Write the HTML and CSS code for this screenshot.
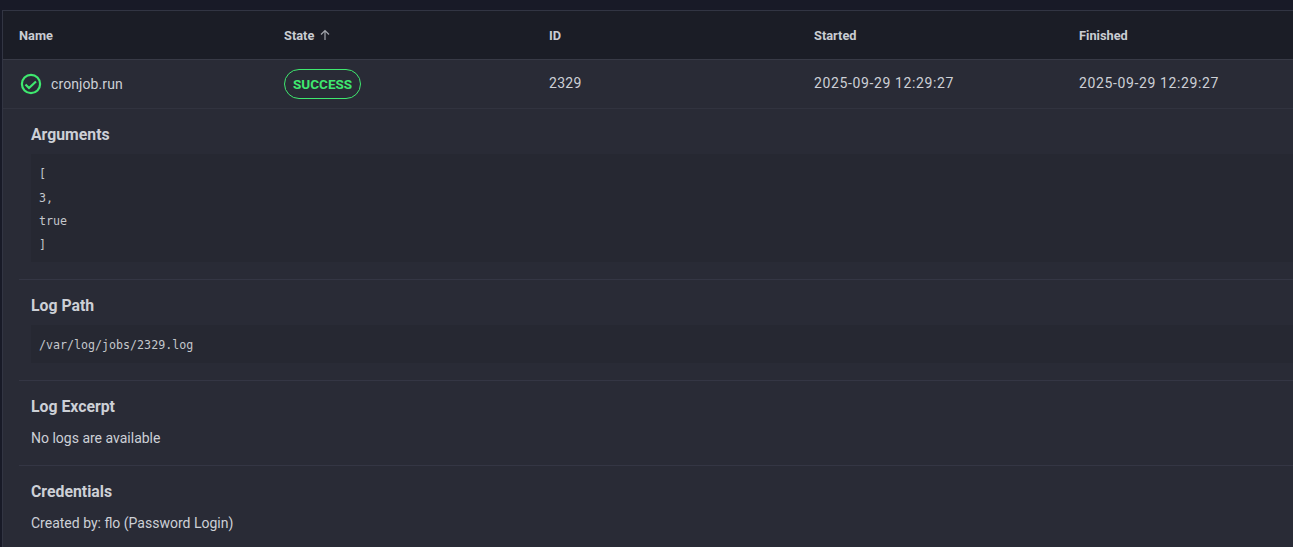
FILE: index.html
```html
<!DOCTYPE html>
<html lang="en">
<head>
<meta charset="utf-8">
<title>Job</title>
<link rel="stylesheet" href="styles.css">
</head>
<body>
<div class="panel">
  <div class="grid head">
    <div class="cell">Name</div>
    <div class="cell">State
      <svg class="arrow" width="12" height="12" viewBox="0 0 12 12" fill="none" stroke="currentColor" stroke-width="1.2"><path d="M6 11V2M2 5.5 6 1.5l4 4"/></svg>
    </div>
    <div class="cell">ID</div>
    <div class="cell">Started</div>
    <div class="cell">Finished</div>
  </div>
  <div class="grid row">
    <div class="cell name">
      <svg class="check" width="22" height="22" viewBox="0 0 22 22" fill="none" stroke="#3fe86f" stroke-width="2.2"><circle cx="11" cy="11" r="9.1"/><path d="M5.5 11.5 9 15l7-6.5"/></svg>
      <span>cronjob.run</span>
    </div>
    <div class="cell"><span class="badge">SUCCESS</span></div>
    <div class="cell value id">2329</div>
    <div class="cell value date">2025-09-29 12:29:27</div>
    <div class="cell value date">2025-09-29 12:29:27</div>
  </div>
  <div class="details">
    <section class="section">
      <h3>Arguments</h3>
      <pre class="code">[
3,
true
]</pre>
    </section>
    <section class="section">
      <h3>Log Path</h3>
      <pre class="code">/var/log/jobs/2329.log</pre>
    </section>
    <section class="section">
      <h3>Log Excerpt</h3>
      <p>No logs are available</p>
    </section>
    <section class="section">
      <h3>Credentials</h3>
      <p>Created by: flo (Password Login)</p>
    </section>
  </div>
</div>
</body>
</html>
```
FILE: styles.css
```css
* { box-sizing: border-box; }
html, body { height: 100%; }
body {
  margin: 0;
  padding: 10px 0 0 2px;
  background: #181a27;
  color: #cdd0d6;
  font-family: "Roboto", "Liberation Sans", sans-serif;
  font-size: 14px;
  overflow: hidden;
}
.panel {
  width: 1340px;
  height: 537px;
  background: #292b36;
  border-top: 1px solid #323543;
  border-left: 1px solid #323543;
}
.grid {
  display: grid;
  grid-template-columns: repeat(5, 265px);
  align-items: center;
  padding-left: 16px;
  border-bottom: 1px solid #383a46;
}
.head {
  height: 49px;
  background: #1b1d26;
  font-size: 12.8px;
  font-weight: 700;
  color: #c9ccd2;
}
.row { height: 49px; border-bottom-color: #31333f; }
.cell { display: flex; align-items: center; }
.arrow { margin-left: 5px; color: #a2a5ac; }
.name span { margin-left: 9px; letter-spacing: 0.1px; }
.check { margin-left: 1px; }
.value { padding-bottom: 2px; }
.id { letter-spacing: 0.3px; }
.date { letter-spacing: 0.63px; }
.badge {
  display: inline-flex;
  align-items: center;
  height: 30px;
  padding: 0 8px;
  border: 1px solid #3fe86f;
  border-radius: 15px;
  color: #3fe86f;
  font-size: 13.5px;
  font-weight: 700;
}
.details { padding-left: 16px; }
.section { padding: 15px 0 17px 12px; border-bottom: 1px solid #343644; }
.section:last-child { border-bottom: 0; }
h3 {
  margin: 0 0 11px;
  padding-top: 1px;
  font-size: 15.8px;
  line-height: 20px;
  font-weight: 700;
  color: #cdd0d6;
}
p { margin: 0; font-size: 14px; line-height: 20px; }
.code {
  margin: -2px 0 0;
  padding: 9px 8px 5px;
  background: #262832;
  font-family: "DejaVu Sans Mono", "Liberation Mono", monospace;
  font-size: 11.65px;
  line-height: 23.5px;
  color: #c4c7cc;
}
```
